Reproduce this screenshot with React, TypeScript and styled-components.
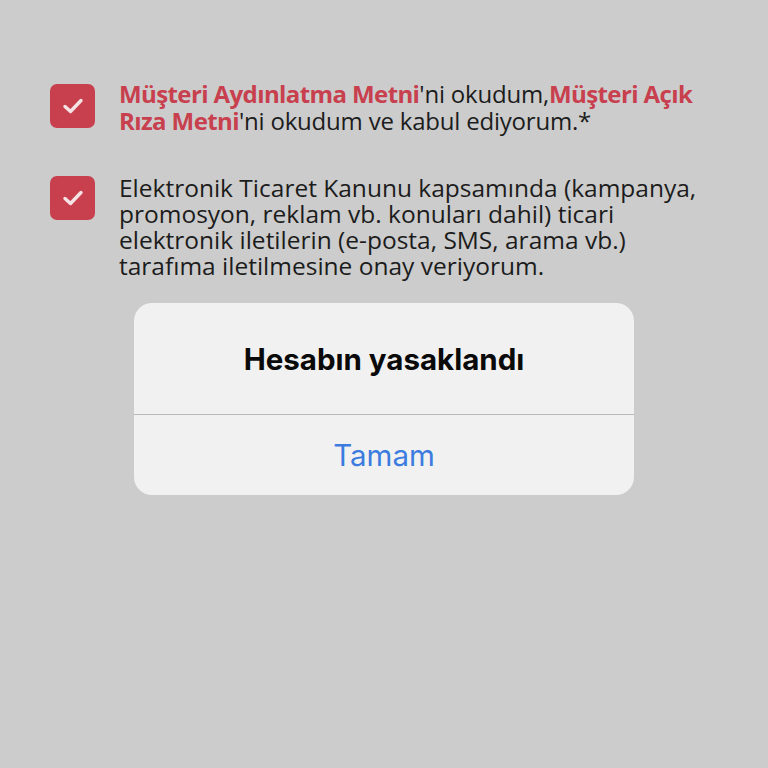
import React from "react";
import styled, { createGlobalStyle } from "styled-components";

const GlobalStyle = createGlobalStyle`
  html, body {
    margin: 0;
    padding: 0;
    background: #cccccc;
  }
  body {
    font-family: "Open Sans", "Liberation Sans", sans-serif;
  }
`;

const Page = styled.div`
  width: 768px;
  height: 768px;
  box-sizing: border-box;
  padding: 84px 0 0 50px;
  display: flex;
  flex-direction: column;
`;

const ConsentRow = styled.div<{ $gap?: number }>`
  display: flex;
  align-items: flex-start;
  gap: 24px;
  margin-bottom: ${(p) => p.$gap ?? 0}px;
`;

const CheckBox = styled.div`
  flex: 0 0 45px;
  width: 45px;
  height: 44px;
  border-radius: 7px;
  background: #c8404e;
  display: flex;
  align-items: center;
  justify-content: center;
`;

const ConsentText = styled.div<{ $size: number; $line: number; $spacing: number; $top: number }>`
  font-size: ${(p) => p.$size}px;
  line-height: ${(p) => p.$line}px;
  letter-spacing: ${(p) => p.$spacing}px;
  margin-top: ${(p) => p.$top}px;
  color: #1c1c1c;
`;

const Line = styled.div`
  white-space: nowrap;
`;

const LinkText = styled.span`
  color: #c8404e;
  font-weight: 700;
  letter-spacing: -0.6px;
`;

const Alert = styled.div`
  align-self: flex-start;
  margin: 24px 0 0 84px;
  width: 500px;
  background: #f1f1f1;
  border-radius: 18px;
  overflow: hidden;
  font-family: Inter, "Liberation Sans", sans-serif;
`;

const AlertTitle = styled.div`
  height: 111px;
  display: flex;
  align-items: center;
  justify-content: center;
  font-size: 29.5px;
  font-weight: 700;
  color: #0a0a0a;
  border-bottom: 1px solid #b9b9b9;
`;

const AlertButton = styled.div`
  height: 80px;
  display: flex;
  align-items: center;
  justify-content: center;
  font-size: 29.5px;
  color: #3c7ce0;
`;

const Check = () => (
  <svg width="22" height="18" viewBox="0 0 22 18">
    <path
      d="M3 9.5 L8.5 14.5 L19 3.5"
      fill="none"
      stroke="#f6e3e5"
      strokeWidth="3.4"
      strokeLinecap="round"
      strokeLinejoin="round"
    />
  </svg>
);

export default function App() {
  return (
    <>
      <GlobalStyle />
      <Page>
        <ConsentRow $gap={42}>
          <CheckBox>
            <Check />
          </CheckBox>
          <ConsentText $size={24} $line={27} $spacing={-0.2} $top={-4}>
            <Line>
              <LinkText>Müşteri Aydınlatma Metni</LinkText>'ni okudum,
              <LinkText>Müşteri Açık</LinkText>
            </Line>
            <Line>
              <LinkText>Rıza Metni</LinkText>'ni okudum ve kabul ediyorum.*
            </Line>
          </ConsentText>
        </ConsentRow>
        <ConsentRow>
          <CheckBox>
            <Check />
          </CheckBox>
          <ConsentText $size={24.5} $line={26} $spacing={0} $top={-1}>
            <Line>Elektronik Ticaret Kanunu kapsamında (kampanya,</Line>
            <Line>promosyon, reklam vb. konuları dahil) ticari</Line>
            <Line>elektronik iletilerin (e-posta, SMS, arama vb.)</Line>
            <Line>tarafıma iletilmesine onay veriyorum.</Line>
          </ConsentText>
        </ConsentRow>
        <Alert>
          <AlertTitle>Hesabın yasaklandı</AlertTitle>
          <AlertButton>Tamam</AlertButton>
        </Alert>
      </Page>
    </>
  );
}
